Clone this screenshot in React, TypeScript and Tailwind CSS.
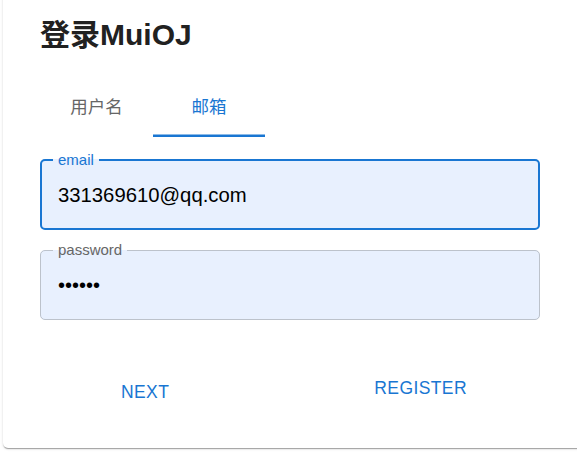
import React from "react";

const font = { fontFamily: '"Liberation Sans", Arial, "Noto Sans CJK SC", sans-serif' };

export default function App() {
  return (
    <div className="w-[577px] h-[453px] overflow-hidden bg-white" style={font}>
      <div className="ml-[3px] -mt-[8px] w-[584px] h-[456px] rounded-[5px] bg-white pl-[37px] pt-[25px] shadow-[0px_2px_1px_-1px_rgba(0,0,0,0.2),0px_1px_1px_0px_rgba(0,0,0,0.14),0px_1px_3px_0px_rgba(0,0,0,0.12)]">
        <h1 className="text-[30px] leading-[36px] font-bold text-[#212121]">登录MuiOJ</h1>

        {/* tabs */}
        <div className="mt-[24px] flex h-[60px]">
          <div className="flex w-[113px] items-center justify-center text-[17.5px] text-[#666666]">用户名</div>
          <div className="flex w-[112px] items-center justify-center text-[17.5px] text-[#1976d2] shadow-[inset_0_-2.5px_0_#1976d2]">
            邮箱
          </div>
        </div>

        {/* email */}
        <fieldset className="mt-[15px] w-[500px] rounded-[5px] border-2 border-[#1976d2] bg-[#e8f0fe] p-0">
          <legend className="ml-[11px] px-[5px] text-[15px] leading-[16px] text-[#1976d2]">email</legend>
          <div className="flex h-[54px] items-center pl-[16px] text-[20.3px] text-black mb-[6px]">331369610@qq.com</div>
        </fieldset>

        {/* password */}
        <fieldset className="mt-[12px] w-[500px] rounded-[5px] border border-[#bcc2cb] bg-[#e8f0fe] p-0">
          <legend className="ml-[12px] px-[5px] text-[15px] leading-[16px] text-[#666666]">password</legend>
          <div className="flex h-[54px] items-center pl-[17px] text-[20px] text-black mb-[7px]">••••••</div>
        </fieldset>

        {/* actions */}
        <div className="mt-[45px] flex items-start">
          <button className="ml-[71px] mt-[4px] h-[46px] rounded-[5px] px-[10px] text-[17.5px] tracking-[0.4px] text-[#1976d2] uppercase">
            Next
          </button>
          <button className="ml-[185px] h-[46px] rounded-[5px] px-[10px] text-[17.5px] tracking-[0.4px] text-[#1976d2] uppercase">
            Register
          </button>
        </div>
      </div>
    </div>
  );
}
